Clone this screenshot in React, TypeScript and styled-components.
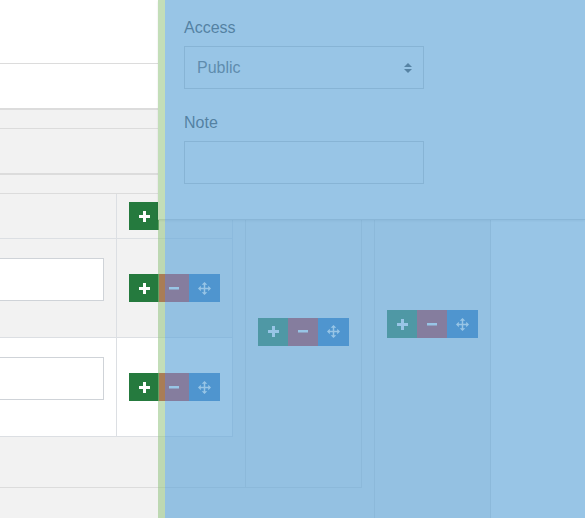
import React from "react"
import styled, { createGlobalStyle } from "styled-components"

const GlobalStyle = createGlobalStyle`
  html, body { margin: 0; padding: 0; }
  body {
    font-family: "Liberation Sans", Arial, sans-serif;
    background: #fff;
  }
  * { box-sizing: border-box; }
`

const Screen = styled.div`
  position: relative;
  width: 585px;
  height: 518px;
  overflow: hidden;
  background: #fff;
`

// page is scrolled a little to the right
const Page = styled.div`
  margin-left: -40px;
  width: 625px;
`

const Band = styled.div<{ $h: number; $line: number; $gray?: boolean }>`
  height: ${p => p.$h + p.$line}px;
  border-bottom: ${p => p.$line}px solid #dcdcdc;
  background: ${p => (p.$gray ? "#f2f2f2" : "#fff")};
`

const Body = styled.div`
  display: flex;
  height: 420px;
  background: #f2f2f2;
`

const Wrap = styled.div`
  display: flex;
  height: 378px;
  border-bottom: 1px solid #dcdcdc;
`

const LeftCol = styled.div`
  width: 273px;
  display: flex;
  flex-direction: column;
`

const Table = styled.div`
  border-right: 1px solid #dcdfe3;
`

const Row = styled.div<{ $h: number; $white?: boolean }>`
  display: flex;
  height: ${p => p.$h + 1}px;
  border-bottom: 1px solid #dcdfe3;
  background: ${p => (p.$white ? "#fff" : "#f2f2f2")};
`

const MainCell = styled.div`
  width: 157px;
  border-right: 1px solid #dcdfe3;
  padding: 19px 12px 0 12px;
`

const ActionCell = styled.div`
  flex: 1;
  display: flex;
  align-items: center;
  padding-left: 12px;
`

const TextInput = styled.div`
  height: 43px;
  background: #fff;
  border: 1px solid #cfd3d8;
`

const Column = styled.div<{ $padTop?: number }>`
  width: 117px;
  margin: 65px 0 0 12px;
  border: 1px solid #dcdcdc;
  border-bottom: none;
  display: flex;
  justify-content: center;
  align-items: ${p => (p.$padTop ? "flex-start" : "center")};
  padding-top: ${p => p.$padTop ?? 0}px;
`

const RightFill = styled.div`
  flex: 1;
  margin-left: 0;
  background: #fff;
`

const Group = styled.div`
  display: flex;
`

const ActionButton = styled.span<{ $kind: "add" | "remove" | "move" }>`
  display: inline-flex;
  align-items: center;
  justify-content: center;
  width: ${p => (p.$kind === "move" ? 31 : 30)}px;
  height: 28px;
  background: ${p =>
    p.$kind === "add" ? "#257a3e" : p.$kind === "remove" ? "#c52827" : "#2470b9"};
`

const Panel = styled.div`
  position: absolute;
  top: 0;
  left: 158px;
  right: 0;
  height: 220px;
  background: #fff;
  border-bottom: 1px solid #d2d2d2;
  box-shadow: 0 1px 2px rgba(0, 0, 0, 0.1);
  padding: 18px 0 0 26px;
`

const Label = styled.div`
  font-size: 16px;
  line-height: 19px;
  color: #333;
  margin-bottom: 9px;
`

const Select = styled.div`
  width: 240px;
  height: 43px;
  border: 1px solid #ccc;
  display: flex;
  align-items: center;
  justify-content: space-between;
  padding: 0 11px 0 12px;
  font-size: 16px;
  color: #555;
  margin-bottom: 24px;
`

const NoteInput = styled.div`
  width: 240px;
  height: 43px;
  border: 1px solid #ccc;
`

const Overlay = styled.div`
  position: absolute;
  top: 0;
  bottom: 0;
  left: 158px;
  right: 0;
  border-left: 7px solid rgba(145, 194, 125, 0.55);
  background: rgba(100, 168, 217, 0.665);
  background-clip: padding-box;
`

const PlusIcon = () => (
  <svg width="11" height="11" viewBox="0 0 11 11" fill="#fff">
    <rect x="4" y="0" width="3" height="11" />
    <rect x="0" y="4" width="11" height="3" />
  </svg>
)

const MinusIcon = () => (
  <svg width="10" height="3" viewBox="0 0 10 3" fill="#fff">
    <rect x="0" y="0" width="10" height="2.5" />
  </svg>
)

const MoveIcon = () => (
  <svg width="13" height="13" viewBox="0 0 14 14" fill="#fff">
    <path d="M7 0 L10 3 H7.8 V6.2 H11 V4 L14 7 L11 10 V7.8 H7.8 V11 H10 L7 14 L4 11 H6.2 V7.8 H3 V10 L0 7 L3 4 V6.2 H6.2 V3 H4 Z" />
  </svg>
)

const SortIcon = () => (
  <svg width="8" height="10" viewBox="0 0 8 10" fill="#3a3a3a">
    <path d="M4 0 L8 4 H0 Z M0 6 H8 L4 10 Z" />
  </svg>
)

const Buttons: React.FC = () => (
  <Group>
    <ActionButton $kind="add"><PlusIcon /></ActionButton>
    <ActionButton $kind="remove"><MinusIcon /></ActionButton>
    <ActionButton $kind="move"><MoveIcon /></ActionButton>
  </Group>
)

const App: React.FC = () => {
  const rows = [false, true]

  return (
    <>
      <GlobalStyle />
      <Screen>
        <Page>
          <Band $h={63} $line={1} />
          <Band $h={44} $line={2} />
          <Body>
            <Wrap>
              <LeftCol>
                <Band $h={18} $line={1} $gray />
                <Band $h={44} $line={2} $gray />
                <Band $h={18} $line={1} $gray />
                <Table>
                  <Row $h={44}>
                    <MainCell />
                    <ActionCell>
                      <ActionButton $kind="add"><PlusIcon /></ActionButton>
                    </ActionCell>
                  </Row>
                  {rows.map((white, i) => (
                    <Row key={i} $h={98} $white={white}>
                      <MainCell>
                        <TextInput />
                      </MainCell>
                      <ActionCell>
                        <Buttons />
                      </ActionCell>
                    </Row>
                  ))}
                </Table>
              </LeftCol>
              <Column>
                <Buttons />
              </Column>
            </Wrap>
            <Column $padTop={134}>
              <Buttons />
            </Column>
            <RightFill />
          </Body>
        </Page>

        <Panel>
          <Label>Access</Label>
          <Select>
            <span>Public</span>
            <SortIcon />
          </Select>
          <Label>Note</Label>
          <NoteInput />
        </Panel>

        <Overlay />
      </Screen>
    </>
  )
}

export default App
